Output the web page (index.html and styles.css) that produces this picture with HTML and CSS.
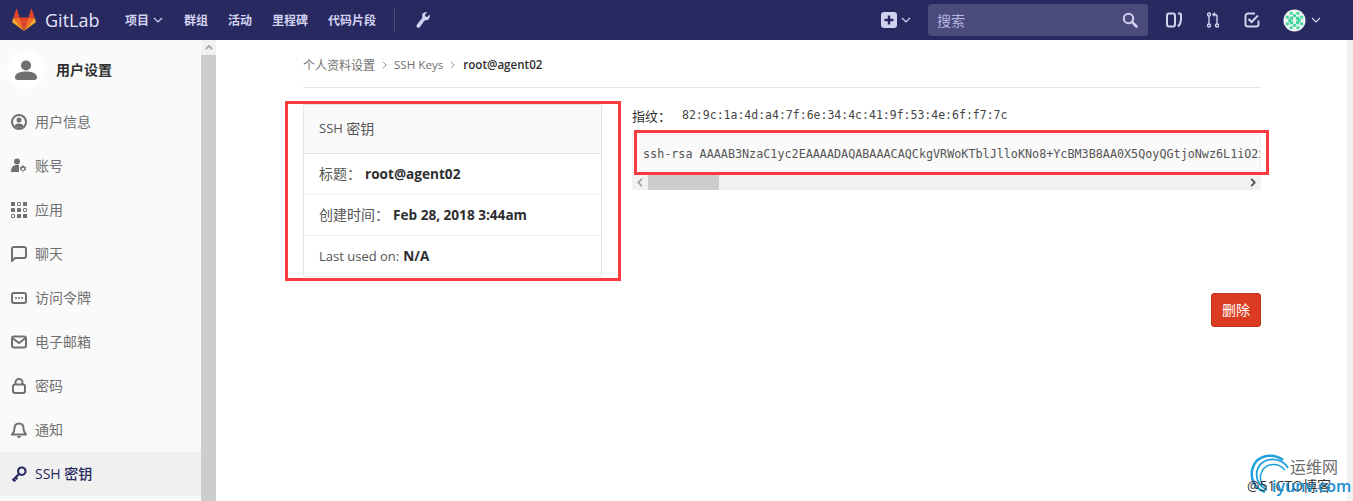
FILE: index.html
```html
<!DOCTYPE html>
<html lang="zh">
<head>
<meta charset="utf-8">
<title>SSH 密钥</title>
<link rel="stylesheet" href="styles.css">
</head>
<body>
<header class="navbar">
  <div class="brand">
    <svg class="logo" viewBox="0 0 210 194"><path fill="#e24329" d="M105.0614 193.655L143.7014 74.734H66.4214z"/><path fill="#fc6d26" d="M105.0614 193.6548L66.4214 74.734H12.2684z"/><path fill="#fca326" d="M12.2684 74.7341L.5274 110.8671c-1.071 3.296.102 6.907 2.906 8.944l101.628 73.844z"/><path fill="#e24329" d="M12.2684 74.734h54.153L43.1524 3.1198c-1.197-3.684-6.407-3.684-7.604 0z"/><path fill="#fc6d26" d="M105.0614 193.6548L143.7014 74.734H197.8544z"/><path fill="#fca326" d="M197.8544 74.7341l11.741 36.133c1.071 3.296-.102 6.907-2.906 8.944l-101.628 73.844z"/><path fill="#e24329" d="M197.8544 74.734h-54.153l23.269-71.6142c1.197-3.684 6.407-3.684 7.604 0z"/></svg>
    <span class="brand-name">GitLab</span>
  </div>
  <nav class="nav-links">
    <a class="nav-link">项目<svg class="chev" viewBox="0 0 10 6"><path d="M1 1l4 4 4-4"/></svg></a>
    <a class="nav-link">群组</a>
    <a class="nav-link">活动</a>
    <a class="nav-link">里程碑</a>
    <a class="nav-link">代码片段</a>
  </nav>
  <div class="nav-divider"></div>
  <svg class="wrench" viewBox="0 0 14 16"><path d="M13.600 2.600L11.300 5l-1.900-.4-.5-1.900L11.200.4C9.400-.2 7.300.4 6.500 2.100c-.6 1.200-.5 2.500 0 3.500L.9 12.700c-.7 1-.5 2.200.3 2.800.8.600 2 .4 2.700-.5l4.900-6.700c1.400.3 3-.1 4-1.300 1-1.200 1.300-3 .8-4.400z"/></svg>
  <div class="nav-right">
    <svg class="plus" viewBox="0 0 16 16"><rect width="16" height="16" rx="3" fill="#d1d1f0"/><path d="M8 3.500v9M3.500 8h9" stroke="#292961" stroke-width="2.400"/></svg>
    <svg class="chev chev-plus" viewBox="0 0 10 6"><path d="M1 1l4 4 4-4"/></svg>
    <div class="search">
      <span class="search-text">搜索</span>
      <svg class="search-icon" viewBox="0 0 16 16"><circle cx="6.500" cy="6.500" r="4.700" fill="none" stroke="#d1d1f0" stroke-width="2"/><path d="M10 10l4.500 4.500" stroke="#d1d1f0" stroke-width="2.600" stroke-linecap="round"/></svg>
    </div>
    <svg class="nav-icon icon-board" viewBox="0 0 16 16"><rect x="1" y="1.500" width="8" height="13" rx="2" fill="none" stroke="#d1d1f0" stroke-width="2"/><path d="M12 1.500h1.700c.8 0 1.300.5 1.300 1.300V7c0 3-1 5.500-3 7.500" fill="none" stroke="#d1d1f0" stroke-width="2"/></svg>
    <svg class="icon-mr" viewBox="0 0 12 16"><g fill="none" stroke="#d1d1f0" stroke-width="1.400"><circle cx="2" cy="2.500" r="1.500"/><circle cx="2" cy="13.500" r="1.500"/><circle cx="10" cy="13.500" r="1.500"/><path d="M2 4v8M10 12V4.500C10 3 9.300 2.500 8 2.500H6.500"/><path d="M8 .7L6 2.500l2 1.800"/></g></svg>
    <svg class="nav-icon icon-todo" viewBox="0 0 16 16"><path d="M14.500 8.500V12a2.500 2.500 0 0 1-2.500 2.500H4A2.500 2.500 0 0 1 1.500 12V4A2.500 2.500 0 0 1 4 1.500h7" fill="none" stroke="#d1d1f0" stroke-width="2"/><path d="M4.500 7l3 3 6.500-6.500" fill="none" stroke="#d1d1f0" stroke-width="2"/></svg>
    <svg class="nav-avatar" viewBox="0 0 24 24"><circle cx="12" cy="12" r="11.500" fill="#f0f5f2"/><g fill="#3fd6a0"><rect x="7" y="3" width="3" height="3"/><rect x="14" y="3" width="3" height="3"/><rect x="10.500" y="5.500" width="3" height="3"/><rect x="3" y="7" width="3" height="3"/><rect x="18" y="7" width="3" height="3"/><rect x="7" y="8" width="3.500" height="3.500"/><rect x="13.500" y="8" width="3.500" height="3.500"/><rect x="5.500" y="10.500" width="3" height="3"/><rect x="15.500" y="10.500" width="3" height="3"/><rect x="7" y="12.500" width="3.500" height="3.500"/><rect x="13.500" y="12.500" width="3.500" height="3.500"/><rect x="10.500" y="15.500" width="3" height="3"/><rect x="3" y="14" width="3" height="3"/><rect x="18" y="14" width="3" height="3"/><rect x="7" y="18" width="3" height="3"/><rect x="14" y="18" width="3" height="3"/></g></svg>
    <svg class="chev chev-user" viewBox="0 0 10 6"><path d="M1 1l4 4 4-4"/></svg>
  </div>
</header>

<div class="layout">
  <aside class="sidebar">
    <div class="side-head">
      <div class="side-avatar">
        <svg class="side-avatar-icon" viewBox="0 0 24 24"><circle cx="12" cy="7" r="5.500"/><path d="M0 20c0-4 4-6.500 12-6.500S24 16 24 20c0 2-1 3-3 3H3c-2 0-3-1-3-3z"/></svg>
      </div>
      <span class="side-title">用户设置</span>
    </div>
    <ul class="side-list">
      <li class="side-item">
        <svg class="side-icon" viewBox="0 0 16 16"><circle cx="8" cy="8" r="7" fill="none" stroke="currentColor" stroke-width="2"/><circle cx="8" cy="6" r="2.500"/><path d="M3.500 12c.8-1.800 2.500-2.500 4.500-2.500s3.700.7 4.500 2.500A6 6 0 0 1 8 14a6 6 0 0 1-4.500-2z"/></svg>
        <span>用户信息</span>
      </li>
      <li class="side-item">
        <svg class="side-icon" viewBox="0 0 16 16"><circle cx="6" cy="3.500" r="3"/><path d="M0 14c0-5 2-7 6-7 1 0 1.500.1 2 .3V14z"/><path d="M12 7.500l1 .2.300 1 .9-.2.800 1.200-.6.800.6.800-.8 1.200-.9-.2-.3 1-1 .2-1-.2-.3-1-.9.200-.8-1.200.6-.8-.6-.8.800-1.200.9.200.3-1z"/><circle cx="12" cy="11" r="1.200" fill="#fafafa"/></svg>
        <span>账号</span>
      </li>
      <li class="side-item">
        <svg class="side-icon" viewBox="0 0 16 16"><g><rect x="0" y="0" width="4" height="4" rx=".5"/><rect x="12" y="0" width="4" height="4" rx=".5"/><rect x="0" y="6" width="4" height="4" rx=".5"/><rect x="6" y="6" width="4" height="4" rx=".5"/><rect x="12.500" y="6.500" width="3" height="3" rx=".5" fill="none" stroke="currentColor"/><rect x="6" y="12" width="4" height="4" rx=".5"/><rect x="12" y="12" width="4" height="4" rx=".5"/><rect x="6.500" y=".5" width="3" height="3" rx=".5" fill="none" stroke="currentColor"/><rect x=".5" y="12.500" width="3" height="3" rx=".5" fill="none" stroke="currentColor"/></g></svg>
        <span>应用</span>
      </li>
      <li class="side-item">
        <svg class="side-icon" viewBox="0 0 16 16"><path d="M1 15V3a2 2 0 0 1 2-2h10a2 2 0 0 1 2 2v7a2 2 0 0 1-2 2H4l-3 3z" fill="none" stroke="currentColor" stroke-width="2"/></svg>
        <span>聊天</span>
      </li>
      <li class="side-item">
        <svg class="side-icon" viewBox="0 0 16 16"><rect x="1" y="3" width="14" height="10" rx="2" fill="none" stroke="currentColor" stroke-width="2"/><circle cx="5" cy="8" r="1"/><circle cx="8" cy="8" r="1"/><circle cx="11" cy="8" r="1"/></svg>
        <span>访问令牌</span>
      </li>
      <li class="side-item">
        <svg class="side-icon" viewBox="0 0 16 16"><rect x="1" y="2.500" width="14" height="11" rx="2" fill="none" stroke="currentColor" stroke-width="2"/><path d="M2 4.500l6 4.500 6-4.500" fill="none" stroke="currentColor" stroke-width="2"/></svg>
        <span>电子邮箱</span>
      </li>
      <li class="side-item">
        <svg class="side-icon" viewBox="0 0 16 16"><rect x="2" y="6.500" width="12" height="8.500" rx="2" fill="none" stroke="currentColor" stroke-width="2"/><path d="M4.500 6.500V4.500a3.500 3.500 0 0 1 7 0v2" fill="none" stroke="currentColor" stroke-width="2"/></svg>
        <span>密码</span>
      </li>
      <li class="side-item">
        <svg class="side-icon" viewBox="0 0 16 16"><path d="M8 1.500c-3 0-4.500 2.300-4.500 5 0 3-1 4.500-2.500 6h14c-1.500-1.500-2.500-3-2.500-6 0-2.700-1.500-5-4.500-5z" fill="none" stroke="currentColor" stroke-width="2" stroke-linejoin="round"/><path d="M6 14a2 2 0 0 0 4 0z"/></svg>
        <span>通知</span>
      </li>
      <li class="side-item side-item-active">
        <svg class="side-icon" viewBox="0 0 16 16"><circle cx="10.800" cy="5.200" r="3.700" fill="none" stroke="currentColor" stroke-width="2.200"/><path d="M8 8L1.500 14.500M2.500 13.500l1.800 1.800M4.500 11.500l1.800 1.800" fill="none" stroke="currentColor" stroke-width="2.200"/></svg>
        <span>SSH 密钥</span>
      </li>
    </ul>
  </aside>
  <div class="side-scroll">
    <div class="side-scroll-btn"><svg class="scroll-arrow" viewBox="0 0 10 6"><path d="M1 5l4-4 4 4"/></svg></div>
  </div>

  <main class="content">
    <div class="container">
      <div class="breadcrumbs">
        <span>个人资料设置</span>
        <svg class="crumb-sep" viewBox="0 0 6 10"><path d="M1 1l4 4-4 4"/></svg>
        <span class="crumb-latin">SSH Keys</span>
        <svg class="crumb-sep" viewBox="0 0 6 10"><path d="M1 1l4 4-4 4"/></svg>
        <span class="crumb-latin crumb-current">root@agent02</span>
      </div>
      <div class="key-row">
        <section class="card">
          <div class="card-head"><span class="latin">SSH&nbsp;</span>密钥</div>
          <div class="card-row"><span>标题：</span><strong class="val">root@agent02</strong></div>
          <div class="card-row"><span>创建时间：</span><strong class="val">Feb 28, 2018 3:44am</strong></div>
          <div class="card-row"><span class="latin">Last used on:</span><strong class="val">N/A</strong></div>
        </section>
        <div class="key-col">
          <div class="finger"><span>指纹：</span><code class="finger-code">82:9c:1a:4d:a4:7f:6e:34:4c:41:9f:53:4e:6f:f7:7c</code></div>
          <pre class="key-pre">ssh-rsa AAAAB3NzaC1yc2EAAAADAQABAAACAQCkgVRWoKTblJlloKNo8+YcBM3B8AA0X5QoyQGtjoNwz6L1iO2xT8vKq</pre>
          <div class="hscroll">
            <svg class="hs-arrow" viewBox="0 0 6 10"><path d="M5 1L1 5l4 4"/></svg>
            <div class="hs-thumb"></div>
            <svg class="hs-arrow hs-arrow-right" viewBox="0 0 6 10"><path d="M1 1l4 4-4 4"/></svg>
          </div>
        </div>
      </div>
      <div class="actions"><button class="btn-remove">删除</button></div>
    </div>
  </main>
  <div class="page-scroll"></div>
</div>

<div class="mark mark-card"></div>
<div class="mark mark-key"></div>

<div class="watermark">
  <svg class="wm-logo" viewBox="0 0 40 40"><g fill="none" stroke="#1e9fdc"><path d="M33 7C24 0 8 1 3 14c-4 11 2 22 12 25" stroke-width="2.500"/><path d="M38 15C32 4 14 3 8 15c-4 9 1 18 9 22" stroke-width="1.800"/><path d="M35 17C28 9 17 10 12 18c-3 6-1 12 3 16" stroke-width="1.500"/></g></svg>
  <span class="wm-cn">运维网</span>
  <span class="wm-cto">@51CTO博客</span>
  <span class="wm-url">iyunv.com</span>
</div>
</body>
</html>
```
FILE: styles.css
```css
* { box-sizing: border-box; }
html, body { margin: 0; height: 100%; overflow: hidden; }
body {
  font-family: "Open Sans", "Noto Sans CJK SC", sans-serif;
  font-size: 14px;
  color: #2e2e2e;
  background: #fff;
  display: flex;
  flex-direction: column;
}

/* navbar */
.navbar {
  height: 40px;
  flex: none;
  background: #292961;
  display: flex;
  align-items: center;
  padding-left: 12px;
  color: #d1d1f0;
}
.brand { display: flex; align-items: center; width: 113px; }
.logo { width: 24px; height: 22px; }
.brand-name { margin-left: 9px; font-size: 18px; color: #e3e3f5; font-family: "Open Sans", sans-serif; }
.nav-links { display: flex; align-items: center; gap: 20px; }
.nav-link { font-size: 12px; font-weight: 700; color: #d1d1f0; display: flex; align-items: center; }
.chev { width: 10px; height: 6px; fill: none; stroke: #d1d1f0; stroke-width: 1.200; }
.nav-link .chev { margin-left: 4px; margin-right: 1px; }
.nav-divider { width: 1px; height: 24px; background: #4a4a7b; margin-left: 18px; }
.wrench { width: 14px; height: 16px; margin-left: 21px; fill: #d1d1f0; }
.nav-right { margin-left: auto; display: flex; align-items: center; padding-right: 32px; }
.plus { width: 16px; height: 16px; }
.chev-plus { margin-left: 4px; }
.search {
  width: 220px;
  height: 32px;
  margin-left: 17px;
  background: #4a4a7b;
  border-radius: 4px;
  display: flex;
  align-items: center;
  justify-content: space-between;
  padding: 0 10px 0 9px;
}
.search-text { color: #b5b5e0; font-size: 14px; }
.search-icon { width: 16px; height: 16px; }
.nav-icon { width: 16px; height: 16px; }
.icon-board { margin-left: 18px; }
.icon-mr { width: 12px; height: 16px; margin-left: 25px; }
.icon-todo { margin-left: 25px; }
.nav-avatar { width: 23px; height: 23px; margin-left: 23px; }
.chev-user { margin-left: 5px; }

/* layout */
.layout { flex: 1; display: flex; min-height: 0; }
.sidebar { width: 201px; flex: none; background: #fafafa; }
.side-head { height: 60px; display: flex; align-items: center; padding-left: 7px; }
.side-avatar {
  width: 38px;
  height: 38px;
  border-radius: 50%;
  background: #fff;
  display: flex;
  align-items: center;
  justify-content: center;
}
.side-avatar-icon { width: 22px; height: 22px; fill: #707070; }
.side-title { margin-left: 11px; margin-bottom: 2px; font-size: 14px; font-weight: 700; color: #2e2e2e; }
.side-list { list-style: none; margin: 0; padding: 0; }
.side-item { height: 44px; display: flex; align-items: center; padding-left: 11px; color: #707070; }
.side-item span { margin-bottom: 2px; }
.side-icon { width: 16px; height: 16px; fill: currentColor; margin-right: 8px; flex: none; }
.side-item-active { background: #f0f0f0; color: #292961; font-weight: 500; }
.side-scroll { width: 15px; flex: none; background: #cdcdcd; }
.side-scroll-btn { height: 15px; background: #f1f1f1; display: flex; align-items: center; justify-content: center; }
.scroll-arrow { width: 8px; height: 5px; fill: none; stroke: #a3a3a3; stroke-width: 2; }

.content { flex: 1; min-width: 0; padding-left: 87px; }
.container { width: 958px; }
.breadcrumbs {
  height: 48px;
  border-bottom: 1px solid #e5e5e5;
  display: flex;
  align-items: center;
  font-size: 12px;
  color: #707070;
  padding-top: 2px;
}
.crumb-latin { font-size: 11.600px; }
.crumb-sep { width: 5px; height: 8px; margin: 0 7px; fill: none; stroke: #909090; stroke-width: 1.200; }
.crumb-current { color: #2e2e2e; font-weight: 600; margin-left: 1px; }
.key-row { display: flex; margin-top: 16px; }
.card { width: 299px; height: 173px; flex: none; border: 1px solid #e5e5e5; border-radius: 2px; }
.card-head {
  height: 49px;
  background: #fafafa;
  border-bottom: 1px solid #e5e5e5;
  padding: 0 0 3px 15px;
  display: flex;
  align-items: center;
  font-size: 14px;
  color: #555;
}
.latin { font-size: 13px; white-space: pre; }
.card-row {
  height: 41px;
  padding: 0 0 2px 15px;
  display: flex;
  align-items: center;
  gap: 4px;
  border-bottom: 1px solid #f0f0f0;
  font-size: 14px;
  color: #555;
}
.card-row:last-child { border-bottom: 0; }
.val { color: #2e2e2e; font-weight: 700; font-size: 13.600px; }
.key-col { margin-left: 30px; width: 629px; }
.finger { display: flex; height: 22px; align-items: center; font-size: 13px; }
.finger-code { font-family: "DejaVu Sans Mono", monospace; font-size: 11.500px; margin-left: 11px; color: #444; }
.key-pre {
  margin: 8px 0 0;
  height: 41px;
  background: #fafafa;
  border: 1px solid #eee;
  border-bottom: 0;
  padding: 12px 0 0 10px;
  overflow: hidden;
  font-family: "DejaVu Sans Mono", monospace;
  font-size: 11.760px;
  color: #555;
}
.hscroll { height: 15px; background: #f1f1f1; display: flex; align-items: center; }
.hs-arrow { width: 6px; height: 9px; margin: 0 5px; flex: none; fill: none; stroke: #a3a3a3; stroke-width: 2; }
.hs-arrow-right { margin-left: auto; stroke: #505050; }
.hs-thumb { width: 71px; height: 15px; background: #cdcdcd; }
.actions { display: flex; justify-content: flex-end; margin-top: 16px; }
.btn-remove {
  width: 50px;
  height: 34px;
  background: #db3b21;
  border: 1px solid #c0341d;
  border-radius: 3px;
  color: #fff;
  font: inherit;
  font-size: 14px;
  padding: 0 0 2px;
}
.page-scroll { width: 6px; flex: none; background: #f1f1f1; }

/* annotations lying over the page */
.mark { position: absolute; border: 3px solid #f93a3f; }
.mark-card { left: 285px; top: 101px; width: 336px; height: 180px; }
.mark-key { left: 634px; top: 130px; width: 635px; height: 45px; }

/* watermark */
.watermark { position: absolute; left: 1247px; top: 453px; width: 100px; height: 42px; }
.wm-logo { position: absolute; left: 3px; top: 0; width: 40px; height: 40px; }
.wm-cn { position: absolute; left: 43px; top: 4px; font-size: 16px; line-height: 20px; color: #6d6d6d; }
.wm-cto { position: absolute; left: 0; top: 24px; font-size: 14px; line-height: 18px; color: #333; white-space: nowrap; }
.wm-url { position: absolute; left: 25px; top: 23px; font-size: 16px; line-height: 20px; font-weight: 600; color: #1a8fcf; white-space: nowrap; }
```
